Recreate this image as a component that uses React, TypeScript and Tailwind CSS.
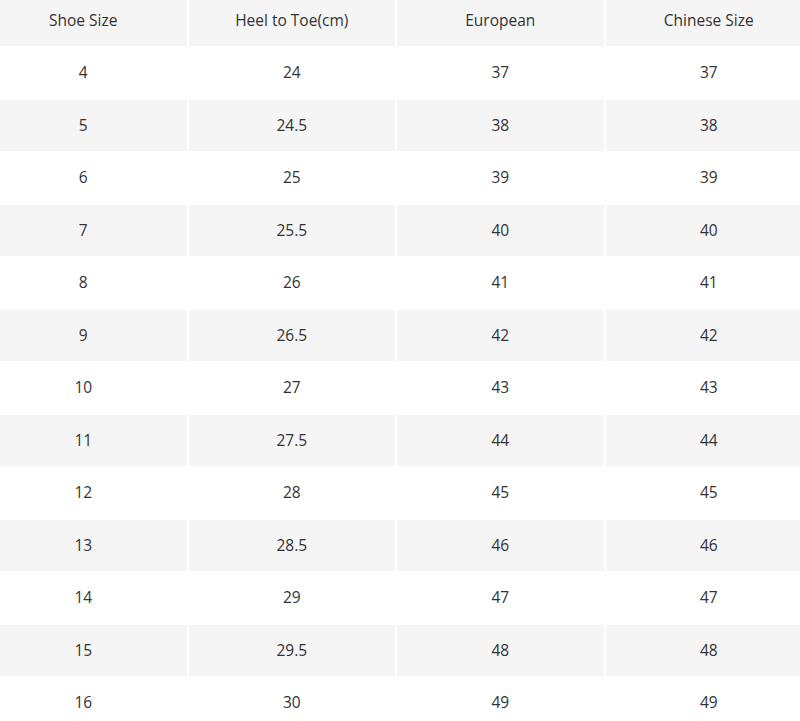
import React from "react";

const rows: [string, string, string, string][] = [
  ["4", "24", "37", "37"],
  ["5", "24.5", "38", "38"],
  ["6", "25", "39", "39"],
  ["7", "25.5", "40", "40"],
  ["8", "26", "41", "41"],
  ["9", "26.5", "42", "42"],
  ["10", "27", "43", "43"],
  ["11", "27.5", "44", "44"],
  ["12", "28", "45", "45"],
  ["13", "28.5", "46", "46"],
  ["14", "29", "47", "47"],
  ["15", "29.5", "48", "48"],
  ["16", "30", "49", "49"],
];

const headers = ["Shoe Size", "Heel to Toe(cm)", "European", "Chinese Size"];

const App: React.FC = () => {
  return (
    <div className="w-[800px] h-[721px] overflow-hidden bg-white font-['Open_Sans',sans-serif] text-[15.5px] text-[#333]">
      <table className="ml-[-22px] mt-[-7px] w-[836px] table-fixed border-separate border-spacing-[2px]">
        <thead>
          <tr>
            {headers.map((h) => (
              <th key={h} className="h-[50.5px] bg-[#f5f5f5] font-normal text-center align-middle p-0">
                {h}
              </th>
            ))}
          </tr>
        </thead>
        <tbody>
          {rows.map((r, i) => (
            <tr key={r[0]}>
              {r.map((c, j) => (
                <td
                  key={j}
                  className={`h-[50.5px] text-center align-middle p-0 ${i % 2 === 1 ? "bg-[#f5f5f5]" : "bg-white"}`}
                >
                  {c}
                </td>
              ))}
            </tr>
          ))}
        </tbody>
      </table>
    </div>
  );
};

export default App;
